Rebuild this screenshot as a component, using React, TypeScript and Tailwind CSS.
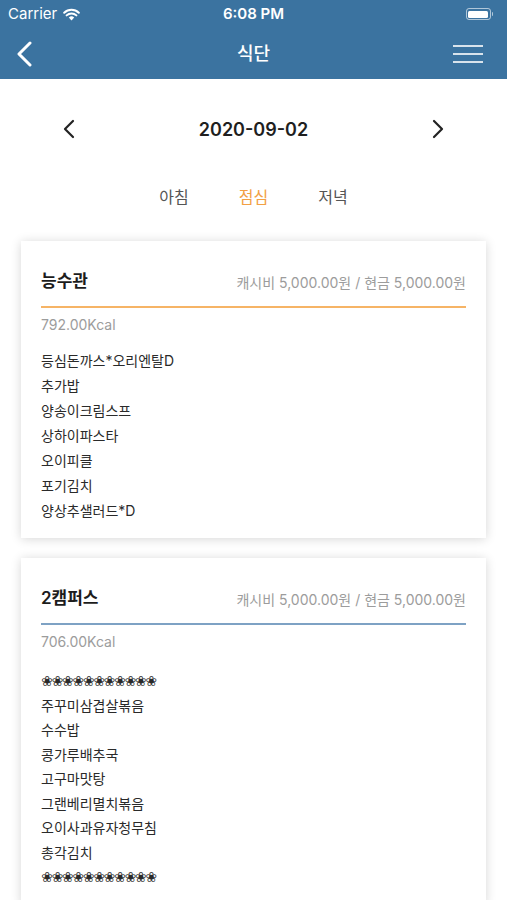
import React from "react";

const FONT = { fontFamily: '"Inter", "Noto Sans CJK KR", sans-serif' };

function Card({ name, line, kcal, items, lh, mt }: { name: string; line: string; kcal: string; items: string[]; lh: string; mt: string }) {
  return (
    <div className="bg-white shadow-[0_1px_10px_rgba(0,0,0,0.16)] px-5 pt-[27px] pb-[15px]">
      <div className="flex items-center justify-between h-[28px]">
        <span className="text-[17px] font-semibold text-[#1c1c1c]">{name}</span>
        <span className="text-[14px] text-[#9c9c9c]">캐시비 5,000.00원 / 현금 5,000.00원</span>
      </div>
      <div className={`mt-[10px] h-[2px] ${line}`} />
      <div className="mt-[7px] text-[14px] leading-[20px] text-[#9c9c9c]">{kcal}</div>
      <div className={`${mt} text-[14px] text-[#2a2a2a]`}>
        {items.map((t, i) => (
          <div key={i} className={lh} style={t.startsWith("❀") ? { fontFamily: '"DejaVu Sans", sans-serif', fontSize: "14px", letterSpacing: "-1.3px" } : undefined}>
            {t}
          </div>
        ))}
      </div>
    </div>
  );
}

export default function App() {
  const flowers = "❀❀❀❀❀❀❀❀❀❀❀";
  return (
    <div className="w-[507px] h-[900px] overflow-hidden bg-white" style={FONT}>
      <div className="bg-[#3b73a0] text-white">
        <div className="h-[28px] flex items-center px-2 relative">
          <span className="text-[15px]">Carrier</span>
          <svg width="17" height="13" viewBox="0 0 17 13" className="ml-[6px]">
            <path d="M8.5 12.5 L5.8 9.6 A3.8 3.8 0 0 1 11.2 9.6 Z" fill="white" />
            <path d="M3.6 7.4 A7 7 0 0 1 13.4 7.4" stroke="white" strokeWidth="2" fill="none" strokeLinecap="round" />
            <path d="M1.2 4.8 A10.5 10.5 0 0 1 15.8 4.8" stroke="white" strokeWidth="2" fill="none" strokeLinecap="round" />
          </svg>
          <span className="absolute left-0 right-0 text-center text-[15px] font-semibold pointer-events-none">6:08 PM</span>
          <div className="ml-auto mr-[6px] flex items-center">
            <div className="w-[25px] h-[12px] rounded-[3px] border border-white/60 p-[1.5px]">
              <div className="w-full h-full bg-white rounded-[1.5px]" />
            </div>
            <div className="w-[1.5px] h-[4px] bg-white/60 ml-[1px] rounded-r" />
          </div>
        </div>
        <div className="h-[51px] flex items-center justify-between px-[15px] relative">
          <svg width="18" height="26" viewBox="0 0 18 26">
            <path d="M15 2 L4 13 L15 24" stroke="white" strokeWidth="3" fill="none" strokeLinecap="round" strokeLinejoin="round" />
          </svg>
          <span className="absolute left-0 right-0 text-center text-[18px] font-medium pointer-events-none">식단</span>
          <div className="flex flex-col gap-[6px] w-[30px] mr-[9px]">
            <div className="h-[2px] bg-white/80" />
            <div className="h-[2px] bg-white/80" />
            <div className="h-[2px] bg-white/80" />
          </div>
        </div>
      </div>
      <div className="flex items-center justify-between px-[62px] mt-[36px] h-[28px]">
        <svg width="14" height="20" viewBox="0 0 14 20">
          <path d="M11 2 L3 10 L11 18" stroke="#222" strokeWidth="2.2" fill="none" strokeLinecap="round" strokeLinejoin="round" />
        </svg>
        <span className="text-[18px] font-semibold text-[#1f1f1f]">2020-09-02</span>
        <svg width="14" height="20" viewBox="0 0 14 20">
          <path d="M3 2 L11 10 L3 18" stroke="#222" strokeWidth="2.2" fill="none" strokeLinecap="round" strokeLinejoin="round" />
        </svg>
      </div>
      <div className="flex justify-center gap-[50px] mt-[42px] text-[16px] h-[24px] items-center">
        <span className="text-[#555]">아침</span>
        <span className="text-[#f2a044]">점심</span>
        <span className="text-[#555]">저녁</span>
      </div>
      <div className="px-[21px] mt-[32px] flex flex-col gap-[20px]">
        <Card
          name="능수관"
          line="bg-[#f6b466]"
          kcal="792.00Kcal"
          lh="leading-[25px]"
          mt="mt-[13px]"
          items={["등심돈까스*오리엔탈D", "추가밥", "양송이크림스프", "상하이파스타", "오이피클", "포기김치", "양상추샐러드*D"]}
        />
        <Card
          name="2캠퍼스"
          line="bg-[#7ea2c4]"
          kcal="706.00Kcal"
          lh="leading-[24.5px]"
          mt="mt-[17px]"
          items={[flowers, "주꾸미삼겹살볶음", "수수밥", "콩가루배추국", "고구마맛탕", "그랜베리멸치볶음", "오이사과유자청무침", "총각김치", flowers]}
        />
      </div>
    </div>
  );
}
